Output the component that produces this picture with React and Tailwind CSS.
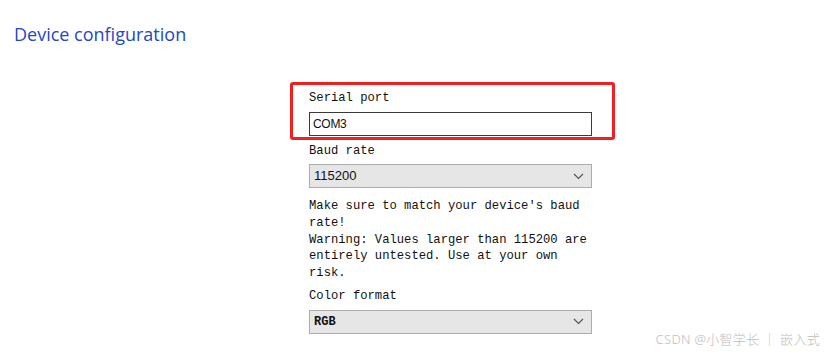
import React from "react";

const Chevron = () => (
  <svg width="11" height="7" viewBox="0 0 11 7" className="text-[#555]">
    <path d="M1 1l4.5 4.5L10 1" fill="none" stroke="currentColor" strokeWidth="1.2" />
  </svg>
);

const Select = ({ value, mono }) => (
  <div className="w-[283px] h-[24px] flex items-center justify-between bg-[#e6e6e6] border border-[#adadad] pl-[4px] pr-[7px]">
    <span className={mono ? "font-['Liberation_Mono',monospace] text-[12px] font-bold text-[#111]" : "font-['Liberation_Sans',sans-serif] text-[13px] text-[#111]"}>
      {value}
    </span>
    <Chevron />
  </div>
);

export default function App() {
  return (
    <div className="w-[828px] h-[356px] bg-white relative overflow-hidden">
      <h1 className="pt-[22px] pl-[14px] text-[18px] leading-[24px] text-[#2347c4] font-['Open_Sans',sans-serif]">
        Device configuration
      </h1>
      <div className="ml-[290px] mt-[36px] w-[340px] flex flex-col font-['Liberation_Mono',monospace] text-[12.2px] text-[#111]">
        <div className="w-[325px] h-[58px] border-[3px] border-[#f02020] rounded-[3px] pl-[16px] pt-[4px]">
          <div className="leading-[18px]">Serial port</div>
          <div className="mt-[5px] w-[283px] h-[24px] border border-[#3a3a3a] flex items-center pl-[3px] font-['Liberation_Sans',sans-serif] text-[12px] tracking-[-0.3px]">
            COM3
          </div>
        </div>
        <div className="pl-[19px]">
          <div className="mt-[2px] leading-[18px]">Baud rate</div>
          <div className="mt-[4px]">
            <Select value="115200" />
          </div>
          <div className="mt-[10px] w-[290px] leading-[16.8px]">
            <div>Make sure to match your device's baud rate!</div>
            <div>Warning: Values larger than 115200 are entirely untested. Use at your own risk.</div>
          </div>
          <div className="mt-[5px] leading-[18px]">Color format</div>
          <div className="mt-[5px]">
            <Select value="RGB" mono />
          </div>
        </div>
      </div>
      <div className="absolute right-[8px] bottom-[7px] text-[13px] text-[#bdbdbd] font-['Noto_Sans','Noto_Sans_CJK_SC',sans-serif] font-light tracking-[0.3px]">
        CSDN @小智学长 ｜ 嵌入式
      </div>
    </div>
  );
}
